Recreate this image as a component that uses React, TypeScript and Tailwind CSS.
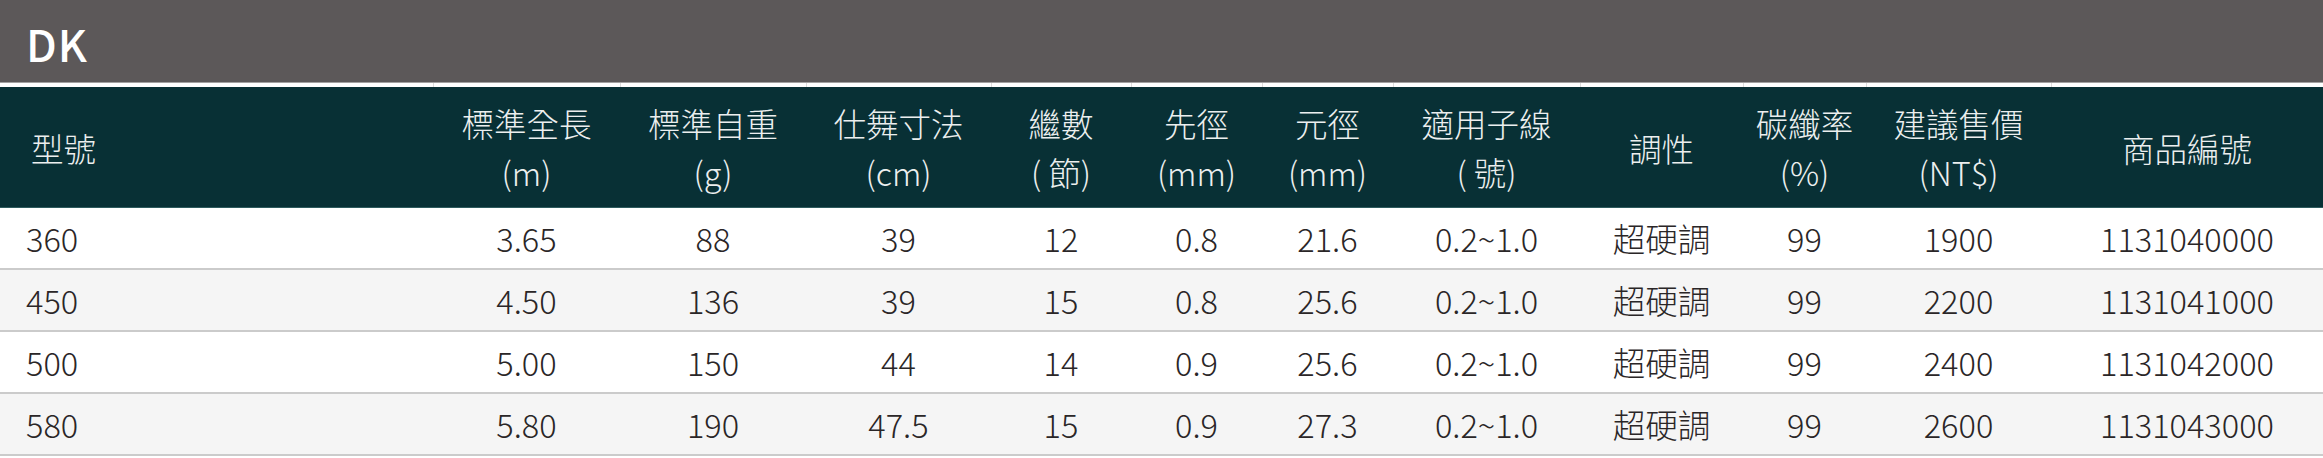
import React from "react";

const cols = "grid-cols-[433px_187px_186px_185px_140px_131px_131px_187px_163px_123px_185px_1fr]";

const headers: { l1: string; l2?: string }[] = [
  { l1: "型號" },
  { l1: "標準全長", l2: "(m)" },
  { l1: "標準自重", l2: "(g)" },
  { l1: "仕舞寸法", l2: "(cm)" },
  { l1: "繼數", l2: "( 節)" },
  { l1: "先徑", l2: "(mm)" },
  { l1: "元徑", l2: "(mm)" },
  { l1: "適用子線", l2: "( 號)" },
  { l1: "調性" },
  { l1: "碳纖率", l2: "(%)" },
  { l1: "建議售價", l2: "(NT$)" },
  { l1: "商品編號" },
];

const rows: string[][] = [
  ["360", "3.65", "88", "39", "12", "0.8", "21.6", "0.2~1.0", "超硬調", "99", "1900", "1131040000"],
  ["450", "4.50", "136", "39", "15", "0.8", "25.6", "0.2~1.0", "超硬調", "99", "2200", "1131041000"],
  ["500", "5.00", "150", "44", "14", "0.9", "25.6", "0.2~1.0", "超硬調", "99", "2400", "1131042000"],
  ["580", "5.80", "190", "47.5", "15", "0.9", "27.3", "0.2~1.0", "超硬調", "99", "2600", "1131043000"],
];

const font = "font-['Noto_Sans_CJK_TC','Noto_Sans',sans-serif]";

export default function App() {
  return (
    <div className={`w-[2323px] h-[458px] bg-white ${font}`}>
      <div className="h-[82px] bg-[#5c5859] flex items-center pl-[26px] pt-[3px]">
        <span className="text-white text-[44px] font-medium leading-none tracking-[1px]">DK</span>
      </div>
      <div className="h-px bg-[#a3a1a1]" />
      <div className={`grid ${cols} h-[4px]`}>
        {headers.map((_, i) => (
          <div key={i} className={i > 0 ? "border-l border-[#dcdcdc]" : ""} />
        ))}
      </div>
      <div className={`grid ${cols} h-[121px] bg-[#083035] border-b border-[#2e5b5e] text-[#ecefef] text-[32.5px] font-extralight leading-[49px]`}>
        {headers.map((h, i) => (
          <div
            key={i}
            className={`flex flex-col justify-center ${i === 0 ? "items-start pl-[31px]" : "items-center"}`}
          >
            <span>{h.l1}</span>
            {h.l2 && <span>{h.l2}</span>}
          </div>
        ))}
      </div>
      {rows.map((r, ri) => (
        <div
          key={ri}
          className={`grid ${cols} h-[62px] border-b-2 border-[#cbcbcb] text-[#2a2627] text-[32.5px] font-extralight ${ri % 2 === 1 ? "bg-[#f5f5f5]" : "bg-white"}`}
        >
          {r.map((c, ci) => (
            <div
              key={ci}
              className={`flex items-center ${ci === 0 ? "justify-start pl-[26px]" : "justify-center"}`}
            >
              {c}
            </div>
          ))}
        </div>
      ))}
    </div>
  );
}
